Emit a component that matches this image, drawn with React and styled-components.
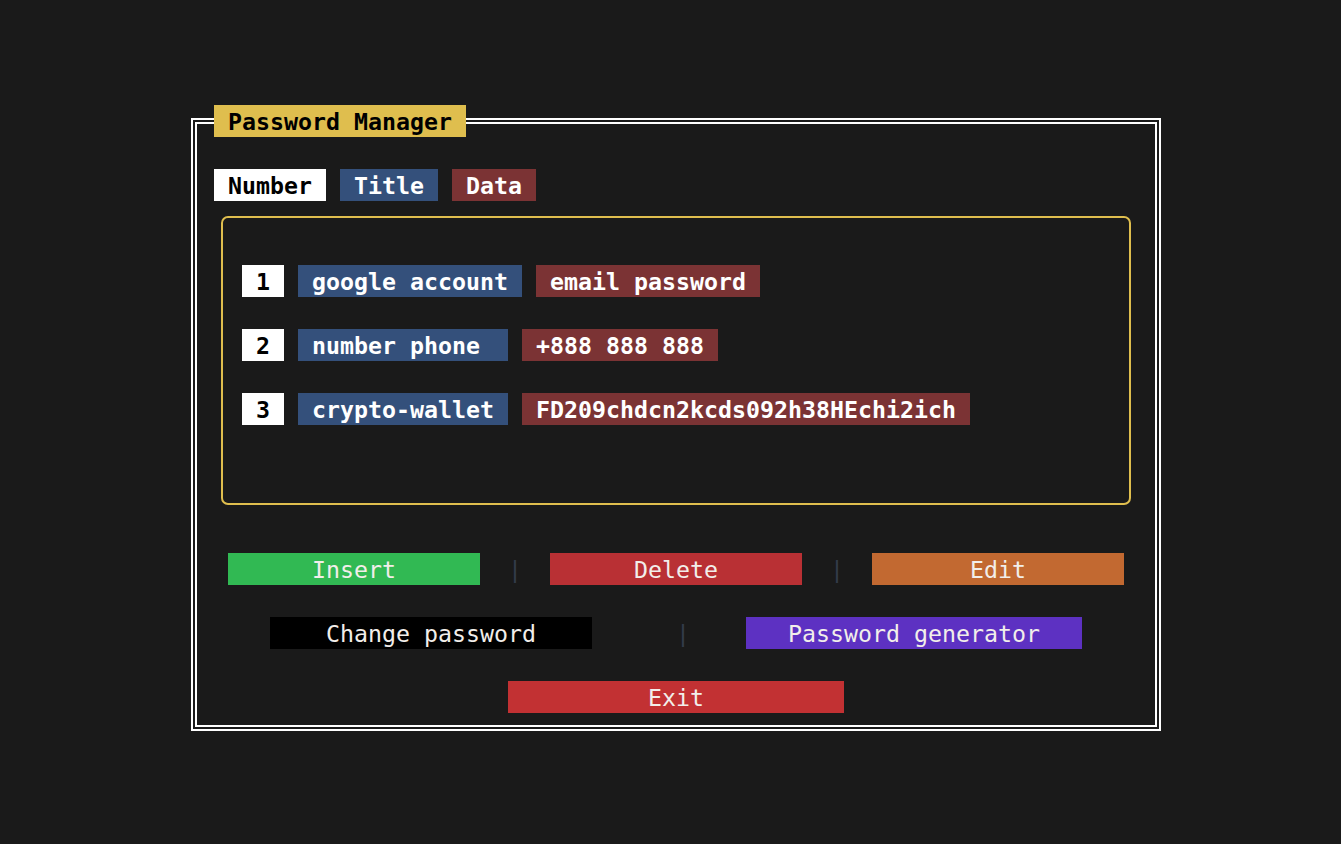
import React from "react";
import styled, { createGlobalStyle } from "styled-components";

const Global = createGlobalStyle`
  html, body { margin: 0; padding: 0; background: #1a1a1a; }
  body { font-family: "DejaVu Sans Mono", "Liberation Mono", monospace; font-size: 23.25px; }
`;

const Screen = styled.div`
  width: 1341px;
  height: 844px;
  background: #1a1a1a;
  padding-top: 118px;
  padding-left: 191px;
  box-sizing: border-box;
`;

const Frame = styled.div`
  position: relative;
  width: 970px;
  height: 613px;
  box-sizing: border-box;
  border: 6px double #ffffff;
  padding: 45px 0 0 17px;
  display: flex;
  flex-direction: column;
`;

const Legend = styled.div`
  position: absolute;
  top: -19px;
  left: 17px;
  height: 32px;
  line-height: 34px;
  overflow: hidden;
  padding: 0 14px;
  background: #dfbe4e;
  color: #000;
  font-weight: bold;
  white-space: pre;
`;

const Tabs = styled.div`
  display: flex;
  gap: 14px;
  height: 32px;
`;

const Chip = styled.span`
  display: inline-block;
  height: 32px;
  line-height: 34px;
  overflow: hidden;
  padding: 0 14px;
  font-weight: bold;
  white-space: pre;
  background: ${(p) => p.$bg};
  color: ${(p) => p.$fg || "#ffffff"};
`;

const ListBox = styled.div`
  margin-top: 15px;
  margin-left: 7px;
  width: 910px;
  height: 289px;
  box-sizing: border-box;
  border: 2px solid #dfbe4e;
  border-radius: 7px;
  padding: 47px 0 0 19px;
  display: flex;
  flex-direction: column;
  gap: 32px;
`;

const Row = styled.div`
  display: flex;
  gap: 14px;
  height: 32px;
`;

const ButtonRow = styled.div`
  display: flex;
  justify-content: center;
  align-items: center;
  width: 958px;
  margin-left: -17px;
  margin-top: ${(p) => p.$top}px;
  height: 32px;
`;

const Button = styled.div`
  width: ${(p) => p.$w}px;
  height: 32px;
  line-height: 34px;
  overflow: hidden;
  text-align: center;
  background: ${(p) => p.$bg};
  color: #f2eeea;
  white-space: pre;
`;

const Sep = styled.span`
  width: 14px;
  height: 32px;
  line-height: 34px;
  overflow: hidden;
  text-align: center;
  color: #333c4a;
  margin: 0 ${(p) => p.$r}px 0 ${(p) => p.$l}px;
`;

const rows = [
  { n: "1", t: "google account", d: "email password" },
  { n: "2", t: "number phone ", d: "+888 888 888" },
  { n: "3", t: "crypto-wallet", d: "FD209chdcn2kcds092h38HEchi2ich" },
];

export default function App() {
  return (
    <Screen>
      <Global />
      <Frame>
        <Legend>Password Manager</Legend>
        <Tabs>
          <Chip $bg="#ffffff" $fg="#000000">Number</Chip>
          <Chip $bg="#34507b">Title</Chip>
          <Chip $bg="#7b3334">Data</Chip>
        </Tabs>
        <ListBox>
          {rows.map((r) => (
            <Row key={r.n}>
              <Chip $bg="#ffffff" $fg="#000000">{r.n}</Chip>
              <Chip $bg="#34507b">{r.t}</Chip>
              <Chip $bg="#7b3334">{r.d}</Chip>
            </Row>
          ))}
        </ListBox>
        <ButtonRow $top={48}>
          <Button $w={252} $bg="#31b953">Insert</Button>
          <Sep $l={28} $r={28}>|</Sep>
          <Button $w={252} $bg="#b93034">Delete</Button>
          <Sep $l={28} $r={28}>|</Sep>
          <Button $w={252} $bg="#c26931">Edit</Button>
        </ButtonRow>
        <ButtonRow $top={32}>
          <Button $w={322} $bg="#000000">Change password</Button>
          <Sep $l={84} $r={56}>|</Sep>
          <Button $w={336} $bg="#5d31c2">Password generator</Button>
        </ButtonRow>
        <ButtonRow $top={32}>
          <Button $w={336} $bg="#c23133">Exit</Button>
        </ButtonRow>
      </Frame>
    </Screen>
  );
}
